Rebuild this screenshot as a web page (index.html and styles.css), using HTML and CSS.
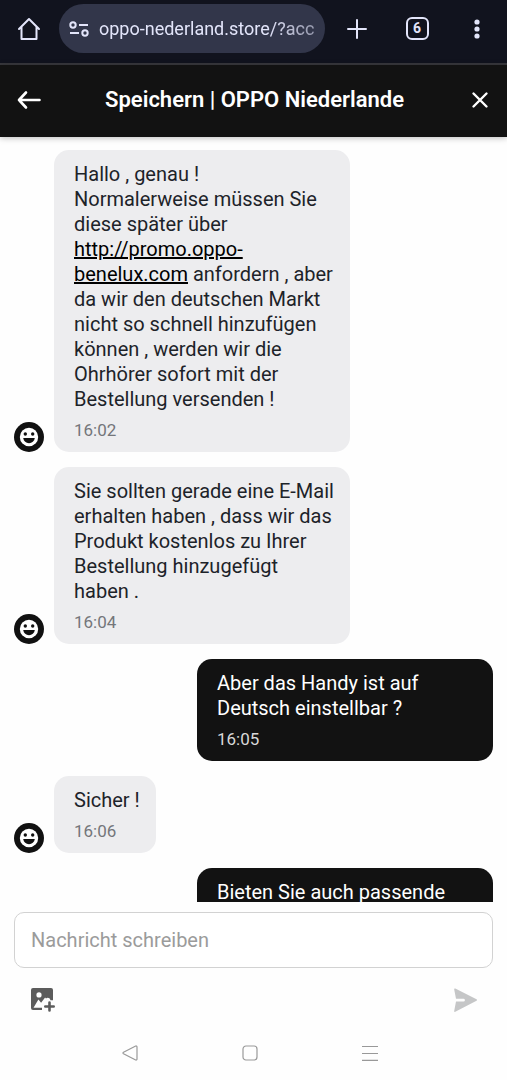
FILE: index.html
```html
<!DOCTYPE html>
<html lang="de">
<head>
<meta charset="utf-8">
<meta name="viewport" content="width=device-width, initial-scale=1">
<title>Speichern | OPPO Niederlande</title>
<link rel="stylesheet" href="styles.css">
</head>
<body>
<svg class="defs" aria-hidden="true">
  <symbol id="smiley" viewBox="0 0 30 30">
    <circle cx="15" cy="15" r="15" fill="#111"/>
    <circle cx="15" cy="15" r="9.2" fill="#fff"/>
    <circle cx="11.3" cy="12" r="1.7" fill="#111"/>
    <circle cx="18.7" cy="12" r="1.7" fill="#111"/>
    <path d="M9.2 16h11.6c-.5 3.200-2.800 5.200-5.800 5.200s-5.300-2-5.800-5.200z" fill="#111"/>
  </symbol>
</svg>
<nav class="browser" aria-label="Browser">
  <button class="icon-button" aria-label="Startseite">
    <svg width="24" height="24" viewBox="0 0 24 24" fill="none" stroke="#e3e5fa" stroke-width="2" stroke-linejoin="round" stroke-linecap="round"><path d="M2 12 12 2l10 10M4.500 10v12h15V10"/></svg>
  </button>
  <button class="address">
    <svg width="20" height="18" viewBox="0 0 20 18" fill="none" stroke="#e3e5fa" stroke-width="2"><circle cx="4" cy="5" r="2.700"/><path d="M10 5h9M1 13h9"/><circle cx="16" cy="13" r="2.700"/></svg>
    <span class="url">oppo-nederland.store/?acc</span>
  </button>
  <button class="icon-button" aria-label="Neuer Tab">
    <svg width="22" height="22" viewBox="0 0 22 22" stroke="#e3e5fa" stroke-width="2" stroke-linecap="round"><path d="M11 2v18M2 11h18"/></svg>
  </button>
  <button class="icon-button" aria-label="6 Tabs"><span class="tabs">6</span></button>
  <button class="icon-button" aria-label="Menü">
    <svg width="8" height="22" viewBox="0 0 8 22" fill="#e3e5fa"><circle cx="4" cy="4" r="2.600"/><circle cx="4" cy="11" r="2.600"/><circle cx="4" cy="18" r="2.600"/></svg>
  </button>
</nav>
<header class="chat-header">
  <button class="icon-button" aria-label="Zurück">
    <svg width="24" height="20" viewBox="0 0 24 20" fill="none" stroke="#fff" stroke-width="2.600" stroke-linecap="round" stroke-linejoin="round"><path d="M22.500 10H2M9 2.500 2 10l7 7.500"/></svg>
  </button>
  <h1 class="title">Speichern | OPPO Niederlande</h1>
  <button class="icon-button" aria-label="Schließen">
    <svg width="18" height="18" viewBox="0 0 18 18" stroke="#fff" stroke-width="2.400" stroke-linecap="round"><path d="M2.500 2.500l13 13M15.500 2.500l-13 13"/></svg>
  </button>
</header>
<main class="messages">
  <div class="row">
    <svg class="avatar" aria-hidden="true"><use href="#smiley"/></svg>
    <article class="bubble">
      <p class="text">Hallo , genau !<br>Normalerweise müssen Sie diese später über <a class="link" href="http://promo.oppo-benelux.com">http://promo.oppo-benelux.com</a> anfordern , aber da wir den deutschen Markt nicht so schnell hinzufügen können , werden wir die Ohrhörer sofort mit der Bestellung versenden !</p>
      <time class="time">16:02</time>
    </article>
  </div>
  <div class="row">
    <svg class="avatar" aria-hidden="true"><use href="#smiley"/></svg>
    <article class="bubble">
      <p class="text">Sie sollten gerade eine E-Mail erhalten haben , dass wir das Produkt kostenlos zu Ihrer Bestellung hinzugefügt haben .</p>
      <time class="time">16:04</time>
    </article>
  </div>
  <div class="row own">
    <article class="bubble">
      <p class="text">Aber das Handy ist auf Deutsch einstellbar ?</p>
      <time class="time">16:05</time>
    </article>
  </div>
  <div class="row">
    <svg class="avatar" aria-hidden="true"><use href="#smiley"/></svg>
    <article class="bubble">
      <p class="text">Sicher !</p>
      <time class="time">16:06</time>
    </article>
  </div>
  <div class="row own">
    <article class="bubble">
      <p class="text">Bieten Sie auch passende</p>
    </article>
  </div>
</main>
<form class="composer">
  <input class="field" type="text" placeholder="Nachricht schreiben" aria-label="Nachricht schreiben">
  <div class="actions">
    <button class="icon-button" type="button" aria-label="Bild hinzufügen">
      <svg width="26" height="26" viewBox="0 0 26 26"><path fill="#5c5c5c" fill-rule="evenodd" d="M3 1h18a2 2 0 0 1 2 2v10.200h-2.600a2.600 2.600 0 0 0-4.400-1.700l-.9-1-4 5.300-2.700-3.300L3.500 20.700H12V23H3a2 2 0 0 1-2-2V3a2 2 0 0 1 2-2zm6 4.300a2.600 2.600 0 1 0 0 5.200 2.600 2.600 0 0 0 0-5.200z"/><path d="M19.500 15.500v8M15.300 19.500h8.400" stroke="#5c5c5c" stroke-width="2.600" stroke-linecap="round"/></svg>
    </button>
    <button class="icon-button" type="submit" aria-label="Senden">
      <svg width="26" height="26" viewBox="0 0 26 26"><path fill="#c5c6c7" d="M2.300 1.600 23.500 12.200a.9.900 0 0 1 0 1.600L2.300 24.800Q1 25.200 1.200 24L3 14.600h7.500a1.400 1.400 0 0 0 0-2.800H3L1.200 2.400Q1 1.200 2.300 1.600z"/></svg>
    </button>
  </div>
</form>
<nav class="system" aria-label="System">
  <button class="icon-button" aria-label="Zurück">
    <svg width="16" height="16" viewBox="0 0 16 16" fill="none" stroke="#999" stroke-width="1.200" stroke-linejoin="round"><path d="M13.700 1 1.500 7.200q-1 .8 0 1.600L13.700 15q1.300.2 1.300-1V2q0-1.200-1.300-1z"/></svg>
  </button>
  <button class="icon-button" aria-label="Startbildschirm">
    <svg width="16" height="16" viewBox="0 0 16 16" fill="none" stroke="#999" stroke-width="1.200"><rect x="1" y="1" width="14" height="14" rx="3"/></svg>
  </button>
  <button class="icon-button" aria-label="Letzte Apps">
    <svg width="16" height="16" viewBox="0 0 16 16" stroke="#999" stroke-width="1.200"><path d="M0 1.500h16M0 8.500h16M0 15.300h16"/></svg>
  </button>
</nav>
</body>
</html>
```
FILE: styles.css
```css
* {
  box-sizing: border-box;
}

body {
  display: flex;
  flex-direction: column;
  height: 100vh;
  margin: 0;
  background: #fefefe;
  color: #1d2329;
  font-family: Roboto, "Liberation Sans", sans-serif;
}

.defs {
  display: none;
}

button {
  padding: 0;
  border: 0;
  background: none;
  color: inherit;
  font: inherit;
}

.icon-button {
  display: flex;
  flex: none;
  align-items: center;
  justify-content: center;
  width: 30px;
  height: 30px;
}

.browser {
  display: flex;
  flex: none;
  align-items: center;
  gap: 30px;
  height: 65px;
  padding: 0 15px 6px 14px;
  border-bottom: 2px solid #38383d;
  background: #11131e;
  color: #e3e5fa;
}

.address {
  display: flex;
  flex: 1;
  align-items: center;
  gap: 10px;
  min-width: 0;
  height: 49px;
  margin: 0 -13px 0 -15px;
  padding: 0 8px 0 10px;
  border-radius: 25px;
  background: #32364a;
}

.url {
  flex: 1;
  overflow: hidden;
  font-size: 18px;
  line-height: 25px;
  text-align: left;
  white-space: nowrap;
  mask-image: linear-gradient(to left, #0008, #000 50px);
}

.tabs {
  width: 23px;
  height: 23px;
  border: 2px solid #e3e5fa;
  border-radius: 6px;
  font-size: 14px;
  font-weight: 700;
  line-height: 19px;
}

.chat-header {
  z-index: 1;
  display: flex;
  flex: none;
  align-items: center;
  height: 72px;
  padding: 0 12px 3px 14px;
  background: #121212;
  box-shadow: 0 1px 6px #0004;
}

.title {
  flex: 1;
  margin: 0;
  color: #fff;
  font-size: 22px;
  font-weight: 600;
  line-height: 25px;
  text-align: center;
}

.messages {
  display: flex;
  flex: 1;
  flex-direction: column;
  gap: 15px;
  min-height: 0;
  padding: 13px 14px 0;
  overflow: hidden;
}

.row {
  display: flex;
  flex: none;
  align-items: flex-end;
  gap: 10px;
}

.own {
  justify-content: flex-end;
}

.avatar {
  flex: none;
  width: 30px;
  height: 30px;
}

.bubble {
  max-width: 296px;
  padding: 12px 16px 10px 20px;
  border-radius: 15px;
  background: #ededef;
}

.own .bubble {
  width: 296px;
  background: #121212;
  color: #fff;
}

.text {
  margin: 0 0 6px;
  font-size: 20px;
  line-height: 25px;
}

.link {
  color: #000;
}

.time {
  display: block;
  color: #74767a;
  font-size: 17px;
  line-height: 24px;
}

.own .time {
  color: #d8d8d8;
}

.composer {
  flex: none;
  padding: 10px 14px 0;
}

.field {
  display: block;
  width: 100%;
  height: 56px;
  padding: 0 16px;
  border: 1px solid #d2d2d2;
  border-radius: 10px;
  background: #fff;
  color: inherit;
  font: inherit;
  font-size: 20px;
}

.field::placeholder {
  color: #9b9b9b;
}

.actions {
  display: flex;
  justify-content: space-between;
  padding: 17px 12px 17px 14px;
}

.system {
  display: flex;
  flex: none;
  justify-content: center;
  gap: 90px;
  padding: 6px 8px 12px 0;
}
```
